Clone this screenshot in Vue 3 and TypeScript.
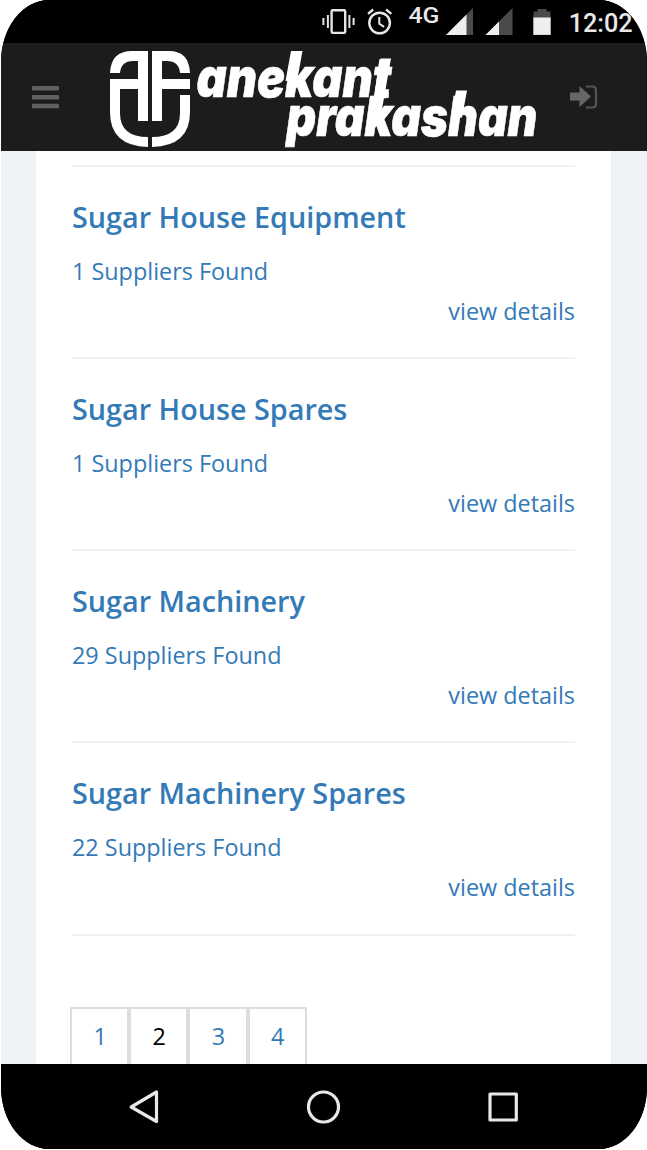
<script setup lang="ts">
interface Category {
  title: string
  suppliers: number
}

const categories: Category[] = [
  { title: 'Sugar House Equipment', suppliers: 1 },
  { title: 'Sugar House Spares', suppliers: 1 },
  { title: 'Sugar Machinery', suppliers: 29 },
  { title: 'Sugar Machinery Spares', suppliers: 22 },
]

const pages: number[] = [1, 2, 3, 4]
const currentPage = 2
</script>

<template>
  <div class="phone">
    <div class="status-bar">
      <svg width="347" height="43" viewBox="300 0 347 43">
        <g fill="none" stroke="#e6e6e6">
          <rect x="331.6" y="10.3" width="13.6" height="22.6" rx="1.2" stroke-width="2.4" />
          <path d="M327.9 15v13M323.4 18v7M349.4 15v13M353.6 18v7" stroke-width="2" />
          <circle cx="379.6" cy="23" r="10.3" stroke-width="2.4" />
          <path d="M379.3 17v6.8l4.8 3" stroke-width="2" />
          <path d="M368 13.8l5.2-4.3M391.3 13.8l-5.2-4.3" stroke-width="2.4" />
        </g>
        <text class="network" x="408.5" y="23" textLength="31" lengthAdjust="spacingAndGlyphs">4G</text>
        <path d="M473 8v27h-27z" fill="#4a4a4a" />
        <path d="M466.5 14.5V35H446z" fill="#eee" />
        <path d="M512.5 8v27h-27z" fill="#4a4a4a" />
        <path d="M499 21.5V35h-13.5z" fill="#eee" />
        <path d="M537.5 9h9v2.5h4V18h-17v-6.5h4z" fill="#4a4a4a" />
        <rect x="533.3" y="17.5" width="17.4" height="17.4" fill="#eee" />
        <text class="clock" x="568.7" y="31.5" textLength="64" lengthAdjust="spacingAndGlyphs">12:02</text>
      </svg>
    </div>

    <header class="app-bar">
      <svg class="menu" width="27" height="23" viewBox="0 0 27 23" fill="#606060">
        <rect width="27" height="4.6" rx=".8" />
        <rect y="9" width="27" height="4.6" rx=".8" />
        <rect y="17.7" width="27" height="4.6" rx=".8" />
      </svg>
      <svg class="logo" width="440" height="108" viewBox="105 43 440 108" fill="#fff">
        <path d="M148 51v70h-10V61h-5q-12 0-13 12h-10q1-22 22-22z" />
        <path d="M152 51h17q20 0 21 22h-10q-1-12-13-12h-5v18h28v10h-28v32h-10z" />
        <path d="M110 79h28v10h-18v24q0 24 28 24v10q-38-1-38-35z" />
        <path d="M190 95v17q0 34-38 35v-10q28 0 28-24V95z" />
        <text class="wordmark" x="196.5" y="97" textLength="195" lengthAdjust="spacingAndGlyphs">anekant</text>
        <text class="wordmark" x="286.5" y="136.3" textLength="251" lengthAdjust="spacingAndGlyphs">prakashan</text>
        <path d="M291 51h11.5l-5.5 30h-11.5z" />
        <path d="M380.5 58.5h10.5l-11 62h-10.5z" />
        <path d="M456 90.5h11l-5 27h-11z" />
      </svg>
      <svg class="login" width="28" height="24" viewBox="0 0 28 24">
        <path d="M0 7.5h9.5V1L21 11.5 9.5 22v-6.5H0z" fill="#666" />
        <path d="M16 1.5h6q4 0 4 4v13q0 4-4 4h-6" fill="none" stroke="#555" stroke-width="2.2" />
      </svg>
    </header>

    <main class="page">
      <section class="panel">
        <article v-for="category in categories" :key="category.title" class="category">
          <h2>{{ category.title }}</h2>
          <p class="found">{{ category.suppliers }} Suppliers Found</p>
          <a class="details">view details</a>
        </article>
        <nav class="pagination">
          <a v-for="page in pages" :key="page" :class="{ current: page === currentPage }">{{ page }}</a>
        </nav>
      </section>
    </main>

    <footer class="system-nav">
      <svg width="646" height="85" viewBox="1 1064 646 85" fill="none" stroke="#e8e8e8" stroke-width="3.2" stroke-linejoin="round">
        <path d="M156.5 1092v29.5l-25.3-14.5z" />
        <circle cx="323.5" cy="1107" r="15" />
        <rect x="490" y="1094" width="26.3" height="26" />
      </svg>
    </footer>
  </div>
</template>

<style>
body {
  background: #fff;
  overflow: hidden;
}
</style>

<style scoped>
.phone {
  box-sizing: border-box;
  width: 646px;
  height: 1149px;
  margin-left: 1px;
  display: flex;
  flex-direction: column;
  overflow: hidden;
  border-radius: 48px / 62px;
  background: #000;
  font-family: "Open Sans", "Noto Sans", sans-serif;
}
.status-bar {
  height: 43px;
  flex: none;
  display: flex;
  justify-content: flex-end;
  background: #000;
}
.network {
  font: 500 22px Roboto, sans-serif;
  fill: #e8e8e8;
}
.clock {
  font: 500 26px Roboto, sans-serif;
  fill: #e8e8e8;
}
svg {
  display: block;
  flex: none;
}
.app-bar {
  height: 108px;
  flex: none;
  display: flex;
  align-items: center;
  background: #1c1c1c;
}
.menu {
  margin-left: 31px;
}
.logo {
  margin-left: 46px;
}
.login {
  margin-left: 25px;
}
.wordmark {
  font: italic 900 55px Inter, sans-serif;
  font-feature-settings: "cv11";
  stroke: #fff;
  stroke-width: 0.6px;
}
.page {
  height: 913px;
  flex: none;
  padding: 0 36px 0 35px;
  overflow: hidden;
  background: #eff3f8;
}
.panel {
  height: 100%;
  box-sizing: border-box;
  padding: 13.5px 36px 0;
  background: #fff;
  color: #337ab7;
}
.category {
  height: 192.25px;
  box-sizing: border-box;
  border-top: 2px solid #f0f1f3;
  padding-top: 34px;
  display: flex;
  flex-direction: column;
}
h2 {
  margin: 0;
  font-size: 28.75px;
  line-height: 32px;
  font-weight: 600;
}
.found {
  margin: 22px 0 0;
  font-size: 23.4px;
  line-height: 32px;
}
.details {
  margin-top: 8px;
  align-self: flex-end;
  font-size: 23.4px;
  line-height: 32px;
}
.pagination {
  border-top: 2px solid #f0f1f3;
  padding-top: 71.5px;
  display: flex;
}
.pagination a {
  box-sizing: border-box;
  width: 59.2px;
  height: 62px;
  flex: none;
  border: 2px solid #ddd;
  padding-left: 1px;
  text-align: center;
  font-size: 23.4px;
  line-height: 54px;
}
.pagination a:first-child {
  margin-left: -2px;
}
.pagination .current {
  color: #000;
}
.system-nav {
  height: 85px;
  flex: none;
  background: #000;
}
</style>
